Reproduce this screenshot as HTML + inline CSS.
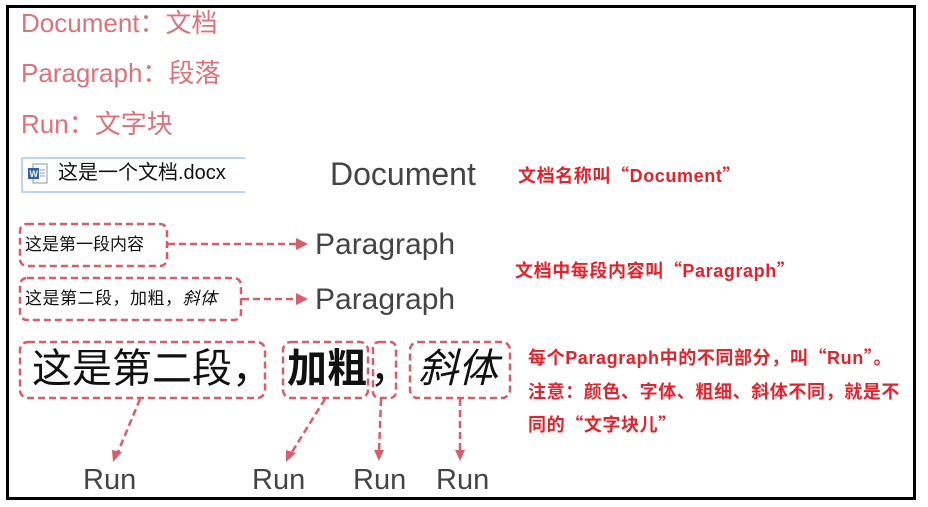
<!DOCTYPE html>
<html><head><meta charset="utf-8"><style>
body{margin:0;width:928px;height:507px;background:#fff;position:relative;overflow:hidden;font-family:"Liberation Sans","Noto Sans CJK SC",sans-serif}
.a{position:absolute;white-space:nowrap;line-height:1}
.pk{color:#e0707a;font-size:26px}
.g{color:#444;font-size:30px}
.r{color:#ec1f28;font-weight:bold;font-size:18px;letter-spacing:0.6px}
.k{color:#111}
.c{font-family:"Noto Sans CJK SC",sans-serif}
</style></head><body>
<div style="position:absolute;left:6px;top:5px;width:904px;height:489px;border:3px solid #000"></div>
<div class="a pk" style="left:21px;top:9px">Document<span class="c">：</span>文档</div>
<div class="a pk" style="left:21px;top:59px">Paragraph<span class="c">：</span>段落</div>
<div class="a pk" style="left:21px;top:110px">Run<span class="c">：</span>文字块</div>

<div style="position:absolute;left:21px;top:157px;width:222px;height:32px;border:2px solid #b9d6f0;border-right:none"></div>
<svg style="position:absolute;left:27px;top:162px" width="24" height="24"><rect x="6" y="2" width="14" height="19" fill="#fff" stroke="#8a97a8"/><line x1="13" y1="8" x2="18" y2="8" stroke="#8a97a8"/><line x1="13" y1="11" x2="18" y2="11" stroke="#8a97a8"/><line x1="13" y1="14" x2="18" y2="14" stroke="#8a97a8"/><rect x="1" y="6" width="11" height="11" fill="#2b5fb8"/><text x="2.5" y="15" font-size="9" fill="#fff" font-weight="bold" font-family="Liberation Sans">W</text></svg>
<div class="a k" style="left:58px;top:163px;font-size:20px">这是一个文档.docx</div>
<div class="a g" style="left:330px;top:158px;font-size:32px">Document</div>
<div class="a r" style="left:518px;top:166px">文档名称叫<span class="c">“</span>Document<span class="c">”</span></div>

<svg style="position:absolute;left:0;top:0" width="928" height="507" fill="none" stroke="#dd5b68" stroke-width="2.5" stroke-dasharray="7 4">
<rect x="20" y="224" width="147" height="42" rx="7"/>
<rect x="20" y="278" width="221" height="42" rx="7"/>
<rect x="20" y="342" width="245" height="56" rx="8"/>
<rect x="283" y="342" width="85" height="56" rx="8"/>
<rect x="373" y="342" width="23" height="56" rx="6"/>
<rect x="410" y="342" width="100" height="56" rx="8"/>
<line x1="168" y1="244" x2="298" y2="244"/>
<line x1="242" y1="299" x2="298" y2="299"/>
<line x1="140" y1="399" x2="118" y2="452"/>
<line x1="325" y1="399" x2="292" y2="452"/>
<line x1="381" y1="399" x2="379" y2="452"/>
<line x1="460" y1="399" x2="460" y2="452"/>
</svg>
<svg style="position:absolute;left:0;top:0" width="928" height="507" fill="#dd5b68">
<polygon points="296,238 308,244 296,250"/>
<polygon points="296,293 308,299 296,305"/>
<polygon points="112,450 122,452 113,462"/>
<polygon points="286,450 296,453 286,462"/>
<polygon points="374,450 384,450 379,461"/>
<polygon points="455,450 465,450 460,461"/>
</svg>

<div class="a k" style="left:25px;top:236px;font-size:17px">这是第一段内容</div>
<div class="a k" style="left:25px;top:290px;font-size:17px;letter-spacing:0.5px">这是第二段，加粗，<i>斜体</i></div>
<div class="a g" style="left:315px;top:230px">Paragraph</div>
<div class="a g" style="left:315px;top:285px">Paragraph</div>
<div class="a r" style="left:515px;top:261px">文档中每段内容叫<span class="c">“</span>Paragraph<span class="c">”</span></div>

<div class="a k" style="left:32px;top:349px;font-size:40px">这是第二段，</div>
<div class="a k" style="left:287px;top:349px;font-size:40px;font-weight:bold">加粗</div>
<div class="a k" style="left:370px;top:349px;font-size:40px">，</div>
<div class="a k" style="left:418px;top:349px;font-size:40px;font-style:italic">斜体</div>

<div class="a r" style="left:528px;top:348px">每个Paragraph中的不同部分，叫<span class="c">“</span>Run<span class="c">”</span>。</div>
<div class="a r" style="left:528px;top:383px">注意：颜色、字体、粗细、斜体不同，就是不</div>
<div class="a r" style="left:528px;top:415px">同的<span class="c">“</span>文字块儿<span class="c">”</span></div>

<div class="a g" style="left:83px;top:466px;font-size:29px">Run</div>
<div class="a g" style="left:252px;top:466px;font-size:29px">Run</div>
<div class="a g" style="left:353px;top:466px;font-size:29px">Run</div>
<div class="a g" style="left:436px;top:466px;font-size:29px">Run</div>
</body></html>
